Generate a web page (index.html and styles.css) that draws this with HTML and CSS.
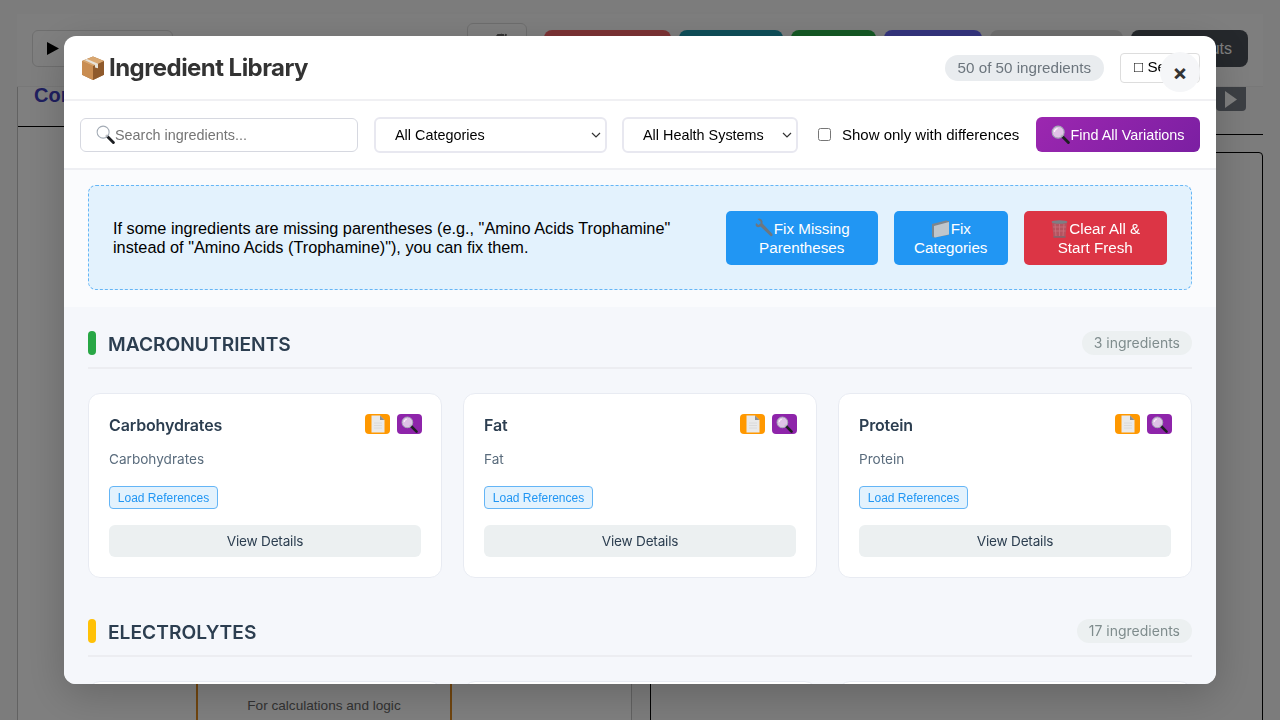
FILE: index.html
```html
<!DOCTYPE html>
<html lang="en">

<head>
    <meta charset="UTF-8">
    <title>Ingredient Library</title>
    <link rel="stylesheet" href="styles.css">
</head>

<body>

    <svg class="defs" width="0" height="0" aria-hidden="true">
        <defs>
            <symbol id="ico-lens" viewBox="0 0 20 20">
                <path d="M11.500 11.500l6.800 6.800" stroke="#1d1f22" stroke-width="3" stroke-linecap="round" />
                <circle cx="7.500" cy="7.500" r="6.300" fill="#fff" fill-opacity=".72" stroke="#a3abb5" stroke-width="1.100" />
                <path d="M3.600 7.200a3.900 3.900 0 0 1 3.300-3.500" fill="none" stroke="#fff" stroke-width="1.100" />
            </symbol>
            <symbol id="ico-doc" viewBox="0 0 18 18">
                <path d="M2.500 .5h8.500l4.500 4.500v12.500h-13z" fill="#e9e9e9" />
                <path d="M11 .5V5h4.500z" fill="#8f8f8f" />
                <path d="M5 8h8M5 10.500h8M5 13h8" stroke="#d6d6d6" stroke-width=".8" />
            </symbol>
            <symbol id="ico-play" viewBox="0 0 12 13">
                <path d="M0 0l12 6.500L0 13z" fill="currentColor" />
            </symbol>
        </defs>
    </svg>

    <div class="app">
        <div class="topbar">
            <button class="play-btn"><svg width="12" height="13"><use href="#ico-play" /></svg></button>
            <div class="top-actions">
                <button class="tool-btn">
                    <svg width="20" height="12" viewBox="0 0 20 12"><path d="M3 10l5-7h6M8 10l4-8M14 10l2-8" fill="none" stroke="#666" stroke-width="2" /></svg>
                </button>
                <button class="act act-red"></button>
                <button class="act act-teal"></button>
                <button class="act act-green"></button>
                <button class="act act-indigo"></button>
                <button class="act act-grey"></button>
                <button class="act act-dark">Shortcuts</button>
            </div>
        </div>
        <div class="workspace">
            <div class="col-left">
                <h3 class="col-title">Configuration</h3>
                <div class="col-left-body">
                    <div class="logic-box">
                        <p>For calculations and logic</p>
                    </div>
                </div>
            </div>
            <div class="col-right">
                <div class="col-right-head"><span class="run-btn"><svg width="12" height="17" viewBox="0 0 12 13" preserveAspectRatio="none"><use href="#ico-play" /></svg></span></div>
                <div class="col-right-box"></div>
            </div>
        </div>
    </div>

    <div class="overlay">
        <div class="modal">
            <button class="close-btn">×</button>

            <div class="modal-header">
                <h2>
                    <svg class="box-icon" width="26" height="26" viewBox="0 0 26 26">
                        <path d="M13 1.500l11 4.600v13.600L13 25 2 19.700V6.100z" fill="#a9713c" />
                        <path d="M2 6.100L13 11v14L2 19.700z" fill="#c98d52" />
                        <path d="M13 11l11-4.900v13.600L13 25z" fill="#8f5a2c" />
                        <path d="M2 6.100l11-4.600 11 4.600L13 11z" fill="#d9a771" />
                        <path d="M7 3.900l11 4.800v4.500l-3-.6V9.900L4.500 5z" fill="#e6e1d8" />
                    </svg>
                    Ingredient Library
                </h2>
                <div class="header-right">
                    <span class="total-pill">50 of 50 ingredients</span>
                    <button class="select-btn">□ Select</button>
                </div>
            </div>

            <div class="toolbar">
                <label class="search-box">
                    <svg width="19" height="19"><use href="#ico-lens" /></svg>
                    <input type="text" placeholder="Search ingredients...">
                </label>
                <select class="filter filter-cat">
                    <option>All Categories</option>
                </select>
                <select class="filter filter-health">
                    <option>All Health Systems</option>
                </select>
                <label class="diff-check"><input type="checkbox"> Show only with differences</label>
                <button class="find-btn"><svg width="19" height="19"><use href="#ico-lens" /></svg>Find All Variations</button>
            </div>

            <div class="modal-body">
                <div class="notice-wrap">
                    <div class="notice">
                        <p>If some ingredients are missing parentheses (e.g., "Amino Acids Trophamine" instead of "Amino Acids (Trophamine)"), you can fix them.</p>
                        <div class="notice-actions">
                            <button class="fix-btn fix-paren">
                                <svg class="inline-ico" width="20" height="20" viewBox="0 0 20 20">
                                    <path d="M6.500 8.500l10 9.500q1.500.8 2-.5.400-1.200-.5-2L8.500 5.500q.6-2.500-1-4Q5.500 0 3.500 1l3 2.500v2l-2 1.500L2 5q-1 2 .3 3.600 1.700 1.500 4.200-.1z" fill="#6d7780" />
                                </svg>Fix Missing Parentheses
                            </button>
                            <button class="fix-btn fix-cat">
                                <svg class="inline-ico" width="20" height="18" viewBox="0 0 20 18">
                                    <path d="M1 4l14-3.500q1-.2 1.500.5L18 1v14L3 17.500q-2 0-2-1.500z" fill="#7d858c" />
                                    <path d="M3 6l15-4v12.500L4 17.500q-1 0-1-1z" fill="#bfc6cc" />
                                </svg>Fix Categories
                            </button>
                            <button class="fix-btn fix-clear">
                                <svg class="inline-ico" width="19" height="19" viewBox="0 0 19 19">
                                    <path d="M2 3.500h15L15.500 18h-12z" fill="#b5535f" />
                                    <path d="M5 5l1 12M9.500 5v12M14 5l-1 12M3 8h13M3.500 12h12" stroke="#c9717c" stroke-width=".8" />
                                    <ellipse cx="9.500" cy="3" rx="8" ry="1.700" fill="#7c7f84" />
                                    <path d="M3.500 18h12" stroke="#6c6f74" stroke-width="1.200" />
                                </svg>Clear All &amp; Start Fresh
                            </button>
                        </div>
                    </div>
                </div>

                <div class="categories">
                    <section class="category">
                        <div class="category-head">
                            <span class="cat-bar cat-macro"></span>
                            <h3>MACRONUTRIENTS</h3>
                            <span class="count-pill">3 ingredients</span>
                        </div>
                        <div class="card-grid">
                            <div class="card">
                                <div class="card-top">
                                    <h4>Carbohydrates</h4>
                                    <div class="card-icons">
                                        <span class="mini mini-orange"><svg width="18" height="18"><use href="#ico-doc" /></svg></span>
                                        <span class="mini mini-purple"><svg width="17" height="17"><use href="#ico-lens" /></svg></span>
                                    </div>
                                </div>
                                <p class="card-sub">Carbohydrates</p>
                                <button class="refs-btn">Load References</button>
                                <button class="details-btn">View Details</button>
                            </div>
                            <div class="card">
                                <div class="card-top">
                                    <h4>Fat</h4>
                                    <div class="card-icons">
                                        <span class="mini mini-orange"><svg width="18" height="18"><use href="#ico-doc" /></svg></span>
                                        <span class="mini mini-purple"><svg width="17" height="17"><use href="#ico-lens" /></svg></span>
                                    </div>
                                </div>
                                <p class="card-sub">Fat</p>
                                <button class="refs-btn">Load References</button>
                                <button class="details-btn">View Details</button>
                            </div>
                            <div class="card">
                                <div class="card-top">
                                    <h4>Protein</h4>
                                    <div class="card-icons">
                                        <span class="mini mini-orange"><svg width="18" height="18"><use href="#ico-doc" /></svg></span>
                                        <span class="mini mini-purple"><svg width="17" height="17"><use href="#ico-lens" /></svg></span>
                                    </div>
                                </div>
                                <p class="card-sub">Protein</p>
                                <button class="refs-btn">Load References</button>
                                <button class="details-btn">View Details</button>
                            </div>
                        </div>
                    </section>

                    <section class="category">
                        <div class="category-head">
                            <span class="cat-bar cat-electro"></span>
                            <h3>ELECTROLYTES</h3>
                            <span class="count-pill">17 ingredients</span>
                        </div>
                        <div class="card-grid">
                            <div class="card card-empty"></div>
                            <div class="card card-empty"></div>
                            <div class="card card-empty"></div>
                        </div>
                    </section>
                </div>
            </div>
        </div>
    </div>

</body>

</html>
```

FILE: styles.css
```css
* {
    box-sizing: border-box;
}

body {
    margin: 0;
    height: 720px;
    overflow: hidden;
    font-family: 'Liberation Sans', Arial, sans-serif;
    background: #f8f8f8;
}

button {
    font-family: inherit;
    cursor: pointer;
}

.defs {
    display: block;
    height: 0;
}

/* page behind the modal */
.app {
    height: 720px;
    overflow: hidden;
    padding: 14px 17px 0 17px;
}

.topbar {
    height: 73px;
    display: flex;
    justify-content: space-between;
    padding: 8px 15px 0 15px;
    background: #fdfdfd;
    border-bottom: 1px solid #f0f0f0;
}

.play-btn {
    width: 141px;
    height: 37px;
    margin-top: 8px;
    padding: 0 0 0 14px;
    display: flex;
    align-items: center;
    color: #000;
    background: #fff;
    border: 1px solid #ddd;
    border-radius: 6px;
}

.top-actions {
    display: flex;
    align-items: flex-start;
    gap: 8px;
}

.tool-btn {
    width: 60px;
    height: 37px;
    margin: 1px 9px 0 0;
    padding: 8px 0 0 22px;
    display: flex;
    background: #fff;
    border: 1px solid #ddd;
    border-radius: 6px;
}

.act {
    height: 37px;
    margin-top: 8px;
    padding: 0 16px;
    border: 0;
    border-radius: 8px;
    color: #fff;
    font-size: 16px;
    text-align: right;
    white-space: nowrap;
}

.act-red { width: 127px; background: #fa666a; }
.act-teal { width: 104px; background: #1e9eb4; }
.act-green { width: 85px; background: #2ab44a; }
.act-indigo { width: 98px; background: #6a6afe; }
.act-grey { width: 133px; background: #e0e0e0; }
.act-dark { width: 117px; background: #4a5058; }

.workspace {
    display: grid;
    grid-template-columns: 615px 613px;
    gap: 18px;
}

.col-left {
    height: 633px;
    background: #fff;
    border-left: 1px solid #c4c4c4;
    border-right: 1px solid #c4c4c4;
}

.col-title {
    margin: 0;
    height: 40px;
    padding: 0 0 0 16px;
    line-height: 16px;
    font-size: 20px;
    color: #3f3fbf;
    border-bottom: 1px solid #000;
}

.col-left-body {
    display: flex;
    padding: 200px 0 0 178px;
}

.logic-box {
    width: 256px;
    height: 393px;
    padding-top: 371px;
    text-align: center;
    border-left: 2px solid #e08a1e;
    border-right: 2px solid #e08a1e;
}

.logic-box p {
    margin: 0;
    font-size: 13.6px;
    color: #666;
}

.col-right-head {
    display: flex;
    justify-content: flex-end;
    height: 48px;
    padding-right: 17px;
    border-bottom: 1px solid #000;
}

.run-btn {
    width: 30px;
    height: 24px;
    display: flex;
    align-items: center;
    justify-content: center;
    color: #fff;
    background: #787e88;
    border-radius: 0 0 4px 4px;
}

.col-right-box {
    height: 600px;
    margin-top: 17px;
    border: 1px solid #000;
    border-radius: 4px;
}

/* modal */
.overlay {
    position: fixed;
    inset: 0;
    display: flex;
    align-items: center;
    justify-content: center;
    background: rgba(0, 0, 0, 0.5);
}

.modal {
    position: relative;
    width: 1152px;
    height: 648px;
    display: flex;
    flex-direction: column;
    background: #fff;
    border-radius: 12px;
    box-shadow: 0 10px 40px rgba(0, 0, 0, 0.2);
    overflow: hidden;
}

.close-btn {
    position: absolute;
    top: 16px;
    right: 16px;
    width: 40px;
    height: 40px;
    padding: 0;
    border: 0;
    border-radius: 50%;
    background: #f5f6f8;
    color: #333;
    font-family: 'Inter', sans-serif;
    font-size: 22px;
    font-weight: 700;
    line-height: 38px;
}

.modal-header {
    flex: none;
    height: 65px;
    display: flex;
    align-items: center;
    justify-content: space-between;
    padding: 0 16px;
    border-bottom: 2px solid #f0f0f3;
}

.modal-header h2 {
    margin: 0;
    display: flex;
    align-items: center;
    gap: 3px;
    font-family: 'Inter', sans-serif;
    font-size: 24px;
    font-weight: 700;
    letter-spacing: -0.55px;
    color: #333;
}

.header-right {
    display: flex;
    align-items: center;
    gap: 16px;
}

.total-pill {
    height: 26px;
    padding: 0 13px;
    line-height: 26px;
    font-size: 15.2px;
    color: #6c757d;
    background: #e9ecef;
    border-radius: 13px;
}

.select-btn {
    width: 80px;
    height: 30px;
    padding: 0 0 2px 13px;
    text-align: left;
    white-space: nowrap;
    overflow: hidden;
    font-size: 15.2px;
    color: #000;
    background: #fff;
    border: 1px solid #ddd;
    border-radius: 4px;
}

.toolbar {
    flex: none;
    height: 69px;
    display: flex;
    align-items: center;
    padding: 0 16px;
    border-bottom: 2px solid #eeeff3;
}

.search-box {
    width: 278px;
    height: 34px;
    display: flex;
    align-items: center;
    padding-left: 15px;
    border: 1px solid #d6d8e0;
    border-radius: 6px;
}

.search-box input {
    flex: 1;
    min-width: 0;
    padding: 0;
    border: 0;
    outline: none;
    font-family: inherit;
    font-size: 14.4px;
}

.filter {
    height: 36px;
    margin-left: 16px;
    padding: 0 24px 0 19px;
    appearance: none;
    font-family: inherit;
    font-size: 14.4px;
    color: #000;
    background: #fff url("data:image/svg+xml,%3Csvg xmlns='http://www.w3.org/2000/svg' width='10' height='6'%3E%3Cpath d='M1 1l4 4 4-4' fill='none' stroke='%23333' stroke-width='1.200'/%3E%3C/svg%3E") no-repeat right 4px center;
    border: 2px solid #e8e8f0;
    border-radius: 6px;
}

.filter-cat {
    width: 233px;
}

.filter-health {
    width: 175.5px;
    margin-left: 15px;
}

.diff-check {
    display: flex;
    align-items: center;
    gap: 11px;
    margin-left: 20.5px;
    font-size: 15px;
    white-space: nowrap;
    color: #000;
}

.diff-check input {
    width: 13px;
    height: 13px;
    margin: 0;
}

.find-btn {
    width: 164px;
    height: 35px;
    margin-left: auto;
    padding: 0;
    display: flex;
    align-items: center;
    justify-content: center;
    font-size: 14.4px;
    color: #fff;
    background: linear-gradient(135deg, #9c27b0, #7b1fa2);
    border: 0;
    border-radius: 6px;
}

.modal-body {
    flex: 1;
    min-height: 0;
    overflow: hidden;
    background: #f5f7fb;
}

.notice-wrap {
    padding: 15px 24px 17px;
    background: #fafbfd;
}

.notice {
    height: 105px;
    display: flex;
    align-items: center;
    justify-content: space-between;
    padding: 0 24px;
    background: #e3f2fd;
    border: 1px dashed #64b5f6;
    border-radius: 8px;
}

.notice p {
    width: 570px;
    margin: 0;
    font-size: 16.3px;
    line-height: 19px;
    color: #000;
}

.notice-actions {
    flex: none;
    display: flex;
    gap: 16px;
}

.fix-btn {
    height: 54px;
    padding: 0;
    font-size: 15.2px;
    line-height: 19px;
    color: #fff;
    background: #2196f3;
    border: 0;
    border-radius: 5px;
}

.inline-ico {
    vertical-align: -4px;
}

.fix-paren { width: 152.5px; padding: 0 18px; }
.fix-cat { width: 113.5px; padding: 0 16px; }
.fix-clear { width: 143.5px; padding: 0 14px; background: #dc3545; }

.categories {
    padding: 24px 24px 0;
}

.category + .category {
    margin-top: 41px;
}

.category-head {
    display: flex;
    align-items: center;
    gap: 12px;
    padding-bottom: 12px;
    border-bottom: 2px solid #ecedf1;
}

.category-head h3 {
    flex: 1;
    margin: 0;
    padding-top: 2px;
    line-height: 22px;
    font-family: 'Inter', sans-serif;
    font-size: 19.2px;
    font-weight: 600;
    color: #2c3e50;
}

.cat-bar {
    width: 8px;
    height: 24px;
    border-radius: 4px;
}

.cat-macro { background: #28a745; }
.cat-electro { background: #ffc107; }

.count-pill {
    height: 24px;
    padding: 0 12px;
    line-height: 24px;
    font-family: 'Inter', sans-serif;
    font-size: 14px;
    color: #7f8c8d;
    background: #ecf0f1;
    border-radius: 12px;
}

.card-grid {
    display: grid;
    grid-template-columns: repeat(3, 1fr);
    gap: 21px;
    margin-top: 24px;
}

.card {
    height: 185px;
    padding: 20px;
    background: #fff;
    border: 1px solid #e8ebf2;
    border-radius: 12px;
}

.card-empty {
    height: 30px;
}

.card-top {
    display: flex;
    justify-content: space-between;
    align-items: flex-start;
}

.card h4 {
    margin: 0;
    padding-top: 1px;
    font-family: 'Inter', sans-serif;
    font-size: 16px;
    font-weight: 600;
    letter-spacing: -0.15px;
    color: #2c3e50;
}

.card-icons {
    display: flex;
    gap: 7px;
    margin-right: -1px;
}

.mini {
    width: 25px;
    height: 20px;
    display: flex;
    align-items: center;
    justify-content: center;
    border-radius: 4px;
}

.mini-orange { background: #ff9800; }
.mini-purple { background: #8e24aa; }

.card-sub {
    margin: 16px 0 0;
    font-family: 'Inter', sans-serif;
    font-size: 13.6px;
    line-height: 17px;
    color: #5a6c7d;
}

.refs-btn {
    display: block;
    width: 109px;
    height: 23px;
    margin-top: 18px;
    padding: 0;
    font-size: 12px;
    color: #2196f3;
    background: #e3f2fd;
    border: 1px solid #64b5f6;
    border-radius: 4px;
}

.details-btn {
    display: block;
    width: 100%;
    height: 32px;
    margin-top: 16px;
    padding: 0;
    font-family: 'Inter', sans-serif;
    font-size: 13.6px;
    letter-spacing: -0.2px;
    color: #2c3e50;
    background: #ecf0f1;
    border: 0;
    border-radius: 6px;
}
```
